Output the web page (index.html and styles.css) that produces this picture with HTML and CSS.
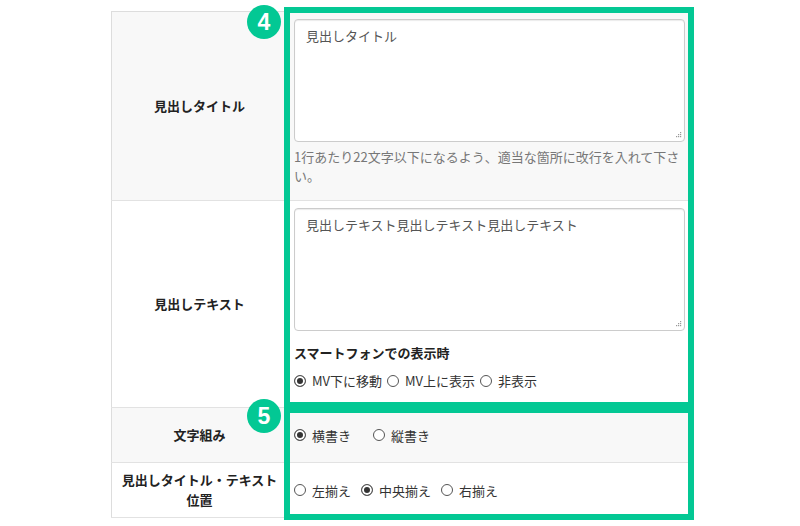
FILE: index.html
```html
<!DOCTYPE html>
<html lang="ja">
<head>
<meta charset="utf-8">
<title>見出し設定</title>
<link rel="stylesheet" href="styles.css">
</head>
<body>
<div class="sheet">
  <table class="form">
    <colgroup><col class="c-label"><col class="c-value"></colgroup>
    <tr class="alt r-title">
      <th>見出しタイトル</th>
      <td>
        <div class="ta-wrap">
          <textarea class="ta" rows="5">見出しタイトル</textarea>
          <svg class="grip" width="6" height="6" viewBox="0 0 6 6"><rect x="4" y="0" width="1.2" height="1.2"/><rect x="2" y="2" width="1.2" height="1.2"/><rect x="4" y="2" width="1.2" height="1.2"/><rect x="0" y="4" width="1.2" height="1.2"/><rect x="2" y="4" width="1.2" height="1.2"/><rect x="4" y="4" width="1.2" height="1.2"/></svg>
        </div>
        <p class="help">1行あたり22文字以下になるよう、適当な箇所に改行を入れて下さい。</p>
      </td>
    </tr>
    <tr class="r-text">
      <th>見出しテキスト</th>
      <td>
        <div class="ta-wrap">
          <textarea class="ta" rows="5">見出しテキスト見出しテキスト見出しテキスト</textarea>
          <svg class="grip" width="6" height="6" viewBox="0 0 6 6"><rect x="4" y="0" width="1.2" height="1.2"/><rect x="2" y="2" width="1.2" height="1.2"/><rect x="4" y="2" width="1.2" height="1.2"/><rect x="0" y="4" width="1.2" height="1.2"/><rect x="2" y="4" width="1.2" height="1.2"/><rect x="4" y="4" width="1.2" height="1.2"/></svg>
        </div>
        <p class="sub">スマートフォンでの表示時</p>
        <div class="radios tight">
          <label class="opt"><input type="radio" name="sp" checked>MV下に移動</label>
          <label class="opt"><input type="radio" name="sp">MV上に表示</label>
          <label class="opt"><input type="radio" name="sp">非表示</label>
        </div>
      </td>
    </tr>
    <tr class="alt r-short">
      <th>文字組み</th>
      <td>
        <div class="radios wide">
          <label class="opt"><input type="radio" name="wm" checked>横書き</label>
          <label class="opt"><input type="radio" name="wm">縦書き</label>
        </div>
      </td>
    </tr>
    <tr class="r-short">
      <th>見出しタイトル・テキスト<br>位置</th>
      <td>
        <div class="radios">
          <label class="opt"><input type="radio" name="al">左揃え</label>
          <label class="opt"><input type="radio" name="al" checked>中央揃え</label>
          <label class="opt"><input type="radio" name="al">右揃え</label>
        </div>
      </td>
    </tr>
  </table>

  <div class="mark mark-a"></div>
  <div class="mark mark-b"></div>
  <span class="badge badge-a">4</span>
  <span class="badge badge-b">5</span>
</div>
</body>
</html>
```

FILE: styles.css
```css
* { box-sizing: border-box; }

html, body {
  margin: 0;
  padding: 0;
  background: #fff;
}

body {
  font-family: "Noto Sans CJK JP", "Noto Sans", sans-serif;
  font-size: 13px;
  line-height: 19px;
  color: #333;
}

.sheet {
  position: relative;
  width: 800px;
  height: 526px;
  padding: 11px 0 0 111px;
}

.form {
  border-collapse: collapse;
  table-layout: fixed;
  width: 580px;
  border-left: 1px solid #ddd;
  border-top: 1px solid #ddd;
}

.c-label { width: 176px; }

.form tr { border-bottom: 1px solid #e2e2e2; }
.form tr.alt { background: #f8f8f8; }

.form th {
  font-weight: bold;
  color: #222;
  text-align: center;
  vertical-align: middle;
  padding: 0 4px;
  border-right: 1px solid #ddd;
  line-height: 20px;
}

.form td {
  vertical-align: top;
  padding: 7px 6px 8px 6px;
}

.ta-wrap {
  position: relative;
}

.ta {
  display: block;
  width: 100%;
  height: 123px;
  margin: 0;
  padding: 6px 11px;
  font: inherit;
  line-height: 19px;
  color: #555;
  background: #fff;
  border: 1px solid #ccc;
  border-radius: 4px;
  box-shadow: inset 0 1px 1px rgba(0,0,0,0.08);
  resize: none;
  overflow: hidden;
}

.grip {
  position: absolute;
  right: 3px;
  bottom: 4px;
  fill: #999;
}

.help {
  margin: 5px 0 7px;
  color: #777;
}

.sub {
  margin: 12px 0 0;
  font-weight: bold;
  color: #222;
}

.radios {
  display: flex;
  align-items: center;
  gap: 10px;
  color: #333;
}
.radios.tight { gap: 5px; margin-top: 9px; padding-bottom: 9px; }
.radios.wide { gap: 22px; }

.r-short td {
  vertical-align: middle;
  height: 55px;
  padding-top: 0;
  padding-bottom: 0;
}

.opt {
  display: inline-flex;
  align-items: center;
  gap: 6px;
  white-space: nowrap;
}

.opt input {
  appearance: none;
  -webkit-appearance: none;
  width: 12px;
  height: 12px;
  margin: 0;
  border: 1px solid #555;
  border-radius: 50%;
  background: #fff;
  flex: none;
}
.opt input:checked {
  background: #333;
  box-shadow: inset 0 0 0 2px #fff;
}

.mark {
  position: absolute;
  left: 284px;
  width: 410px;
  border: 6px solid #03c894;
  pointer-events: none;
}
.mark-a { top: 7px; height: 401px; }
.mark-b { top: 407px; height: 113px; }

.badge {
  position: absolute;
  left: 247px;
  width: 34px;
  height: 34px;
  border-radius: 50%;
  background: #03c894;
  color: #fff;
  font-family: "Liberation Sans", Arial, sans-serif;
  font-weight: bold;
  font-size: 23px;
  line-height: 34px;
  text-align: center;
}
.badge-a { top: 5px; }
.badge-b { top: 399px; }
```
